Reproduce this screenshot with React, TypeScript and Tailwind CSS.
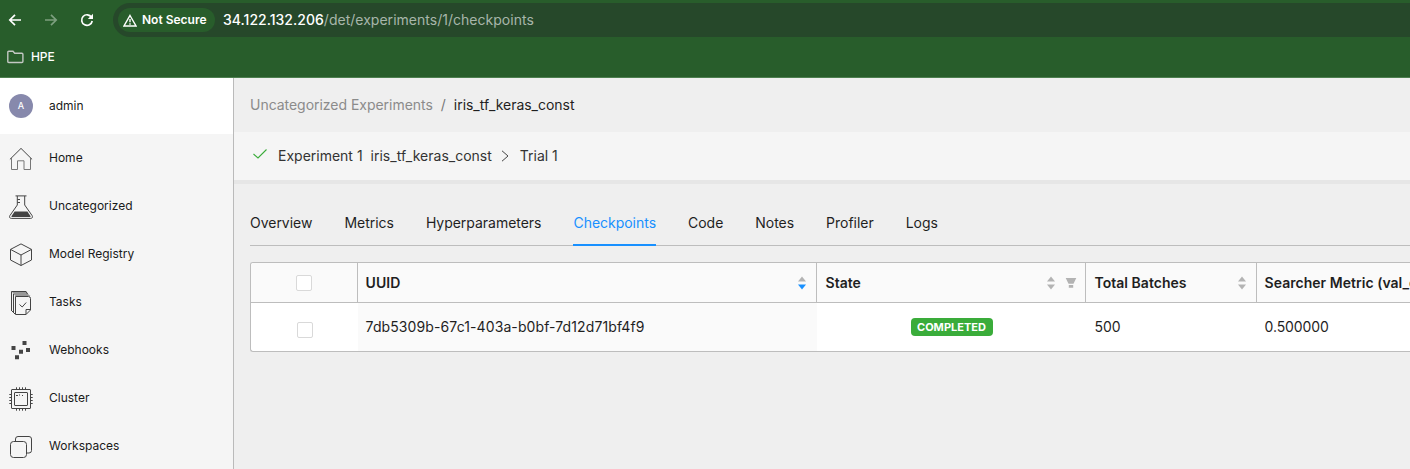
import type { ReactNode } from 'react';

function Icon({ children }: { children: ReactNode }) {
  return (
    <svg width="24" height="24" viewBox="0 0 24 24" fill="none" stroke="#444" strokeWidth="1" className="shrink-0">
      {children}
    </svg>
  );
}

const navItems: { label: string; icon: ReactNode }[] = [
  {
    label: 'Home',
    icon: (
      <Icon>
        <path d="M.9 12.4 12 1.4l11.100 11" />
        <path d="M2.500 10.800v11.700h6v-8.700h6.500v8.700h6.500V10.800" stroke="#777" />
      </Icon>
    ),
  },
  {
    label: 'Uncategorized',
    icon: (
      <Icon>
        <path d="M6.500.9h11M8.300 1v9L.9 20.600c-.8 1.400-.2 2.800 1.400 2.800h19.400c1.600 0 2.200-1.400 1.400-2.800L15.700 10V1M8.500 4.500h2.500M8.500 7.500h2.500" />
        <path d="M5.600 16.500h12.800l3 4.400c.4.6.1 1.100-.6 1.100H3.200c-.7 0-1-.5-.6-1.100z" fill="#444" stroke="none" />
      </Icon>
    ),
  },
  {
    label: 'Model Registry',
    icon: (
      <Icon>
        <path d="M12 .9 22.500 6.400v10.600L12 22.500 1.500 17V6.400zM1.500 6.400 12 12 22.500 6.400M12 12v10.500" />
      </Icon>
    ),
  },
  {
    label: 'Tasks',
    icon: (
      <Icon>
        <path d="M2.500 0H17l2 3 2.500 2H6.500L4.500 3z" fill="#999" stroke="none" />
        <path d="M2.500 20V.5h14.500l1.500 2.500M6 23l-3.500-3.500M4.500 21V3M6.500 5.500h13q2 0 2 2V19l-4.500 4.500H6.500zM21.500 18.500H17v5M10.500 13.500l2.700 2.500 4-4.500" />
      </Icon>
    ),
  },
  {
    label: 'Webhooks',
    icon: (
      <Icon>
        <path d="M13.500 2h4v4h-4zM2.500 7h4v4h-4zM17 9h4v4h-4zM10 10.800h4v4h-4zM6 16.300h4v4H6z" fill="#444" stroke="none" />
      </Icon>
    ),
  },
  {
    label: 'Cluster',
    icon: (
      <Icon>
        <rect x="2.500" y="2.500" width="19" height="19" rx=".5" />
        <rect x="5.500" y="5.500" width="13" height="13" rx=".5" />
        <path d="M7.500.3v2M10.500.3v2M13.500.3v2M16.500.3v2M7.500 21.700v2M10.500 21.700v2M13.500 21.700v2M16.500 21.700v2M.3 7.500h2M.3 10.500h2M.3 13.500h2M.3 16.500h2M21.700 7.500h2M21.700 10.500h2M21.700 13.500h2M21.700 16.500h2M7 8.500h2M10 8h1M13 8.500h1" />
      </Icon>
    ),
  },
  {
    label: 'Workspaces',
    icon: (
      <Icon>
        <rect x="1.500" y="6.500" width="16" height="16" rx="3" />
        <path d="M6.500 6.500V4q0-2.500 2.500-2.500h11Q22.500 1.500 22.500 4v11.500q0 2.500-2.500 2.500h-2.500" />
      </Icon>
    ),
  },
];

const tabs = ['Overview', 'Metrics', 'Hyperparameters', 'Checkpoints', 'Code', 'Notes', 'Profiler', 'Logs'];

function Sorter({ descending = false }: { descending?: boolean }) {
  return (
    <svg width="8" height="14" viewBox="0 0 8 14" className="shrink-0">
      <path d="M4 0.500 8 5.500H0z" fill="#b3b3b3" />
      <path d="M4 13.500 8 8.500H0z" fill={descending ? '#1890ff' : '#b3b3b3'} />
    </svg>
  );
}

function Checkbox() {
  return <span className="block size-4 rounded-[2px] border border-[#d9d9d9] bg-white" />;
}

function BrowserBar() {
  return (
    <header className="h-[78px] shrink-0 border-b border-[#4d7f4f] bg-[#285d2b] text-white">
      <div className="flex h-10 items-center">
        <svg width="104" height="40" viewBox="0 0 104 40" fill="none" strokeWidth="1.700" className="shrink-0">
          <path d="M21 20H10M15 14.800 9.800 20l5.200 5.200" stroke="#fff" />
          <path d="M45 20h11M51 14.800l5.200 5.200-5.200 5.200" stroke="#7d9f7f" />
          <path d="M91.500 17.300A5.300 5.300 0 1 0 92.200 21" stroke="#fff" />
          <path d="M93 13.800v5.200h-5.200z" fill="#fff" />
        </svg>
        <div className="ml-[9px] flex h-[34px] flex-1 items-center rounded-l-full bg-[#26482a] pl-[5px]">
          <div className="flex h-6 w-[97px] items-center rounded-full bg-[#285d2b] pl-[5px]">
            <svg width="14" height="13" viewBox="0 0 14 13" fill="none" stroke="#fff" strokeWidth="1.400">
              <path d="M7 1.500 13 12H1z" />
              <path d="M7 5v3.300M7 9.200v1.500" />
            </svg>
            <span className="ml-[5px] whitespace-nowrap pb-px text-[12px] font-semibold">Not Secure</span>
          </div>
          <div className="ml-2 whitespace-nowrap pb-px text-[14px] tracking-[0.02px] text-[#a8b6aa]">
            <span className="font-medium text-white">34.122.132.206</span>/det/experiments/1/checkpoints
          </div>
        </div>
      </div>
      <div className="flex h-[34px] items-center pl-[7px]">
        <svg width="17" height="14" viewBox="0 0 17 14" fill="none" stroke="#c3c8c3" strokeWidth="1.400">
          <path d="M.8 11.500V2.200q0-1 1-1h4.200l1.700 2h7.200q1 0 1 1v7.300q0 1-1 1H1.800q-1 0-1-1z" />
        </svg>
        <span className="ml-[7px] text-[12px] font-medium tracking-[-0.1px]">HPE</span>
      </div>
    </header>
  );
}

function Sidebar() {
  return (
    <aside className="w-[234px] shrink-0 overflow-hidden border-r border-[#bababa] bg-[#f5f5f5] text-[12px] text-[#1a1a1a]">
      <div className="flex h-14 items-center bg-white pl-[9px]">
        <span className="flex size-6 items-center justify-center rounded-full bg-[#8789ac] text-[9px] font-medium text-white">A</span>
        <span className="ml-4">admin</span>
      </div>
      <nav>
        {navItems.map(({ label, icon }) => (
          <a key={label} className="flex h-12 items-center pl-[9px]">
            <span className="pt-0.5">{icon}</span>
            <span className="ml-4">{label}</span>
          </a>
        ))}
      </nav>
    </aside>
  );
}

function CheckpointTable() {
  return (
    <div className="ml-4 mt-4 h-[90px] overflow-hidden rounded-l-[3px] border border-r-0 border-[#bdbdbd] bg-white">
      <div className="grid h-10 w-[1300px] grid-cols-[107px_459px_269px_171px_294px] border-b border-[#bdbdbd] bg-[#fafafa] font-semibold tracking-[0.03px]">
        <div className="flex items-center justify-center border-r border-[#bdbdbd]"><Checkbox /></div>
        <div className="flex items-center justify-between border-r border-[#bdbdbd] pl-[7.600px] pr-[10px]">
          UUID<Sorter descending />
        </div>
        <div className="flex items-center border-r border-[#bdbdbd] pl-[8.500px] pr-2">
          <span className="flex-1">State</span>
          <Sorter />
          <svg width="12" height="12" viewBox="0 0 12 12" fill="#b3b3b3" className="ml-[10px]">
            <path d="M.7 1h10.600L8.500 6.800h-5zM3.800 8h4.400v2.800H3.800z" />
          </svg>
        </div>
        <div className="flex items-center justify-between border-r border-[#bdbdbd] pl-[8.500px] pr-[10px]">
          Total Batches<Sorter />
        </div>
        <div className="flex items-center pl-[7.600px]">Searcher Metric (val_categorical)</div>
      </div>
      <div className="grid h-12 w-[1300px] grid-cols-[107px_459px_269px_171px_294px]">
        <div className="flex items-center justify-center pl-px pt-[6px]"><Checkbox /></div>
        <div className="flex items-center bg-[#fafafa] pb-px pl-[7.600px] tracking-[0.100px]">7db5309b-67c1-403a-b0bf-7d12d71bf4f9</div>
        <div className="flex items-center justify-center">
          <span className="flex h-[18px] w-[82px] items-center justify-center rounded bg-[#3aac3a] text-[11px] font-bold tracking-[0.02px] text-white">COMPLETED</span>
        </div>
        <div className="flex items-center pb-px pl-[8.500px]">500</div>
        <div className="flex items-center pb-px pl-[7.600px] tracking-[-0.1px]">0.500000</div>
      </div>
    </div>
  );
}

export default function App() {
  return (
    <div className="flex h-[469px] w-full flex-col overflow-hidden font-['Inter',sans-serif]">
      <BrowserBar />
      <div className="flex min-h-0 flex-1">
        <Sidebar />
        <main className="min-w-0 flex-1 overflow-hidden bg-[#efefef] text-[14px] text-[#1f1f1f]">
          <div className="flex h-[54px] items-center pb-px pl-4 tracking-[-0.03px]">
            <span className="text-[#8b8b8b]">Uncategorized Experiments</span>
            <span className="mx-2 text-[#777]">/</span>
            <span>iris_tf_keras_const</span>
          </div>
          <div className="flex h-[52px] items-center border-b-4 border-[#e6e6e6] bg-[#f5f5f5] pl-[18px] text-[#333]">
            <svg width="16" height="14" viewBox="0 0 16 14" fill="none" stroke="#3aac3a" strokeWidth="1.100" className="mb-1">
              <path d="M1.500 7 6 11 14.500 2.500" />
            </svg>
            <span className="ml-[10px] pb-px">Experiment 1</span>
            <span className="ml-2 pb-px">iris_tf_keras_const</span>
            <svg width="8" height="12" viewBox="0 0 8 12" fill="none" stroke="#444" className="ml-[9px]">
              <path d="M1 .8 7 6 1 11.200" />
            </svg>
            <span className="ml-[11px] pb-px">Trial 1</span>
          </div>
          <div className="ml-4 flex h-[62px] gap-8 border-b border-[#bdbdbd] tracking-[-0.025px]">
            {tabs.map((tab) => (
              <div
                key={tab}
                className={
                  tab === 'Checkpoints'
                    ? 'h-[62px] border-b-2 border-[#1890ff] pt-[29px] leading-5 text-[#1890ff]'
                    : 'h-[62px] pt-[29px] leading-5'
                }
              >
                {tab}
              </div>
            ))}
          </div>
          <CheckpointTable />
        </main>
      </div>
    </div>
  );
}
